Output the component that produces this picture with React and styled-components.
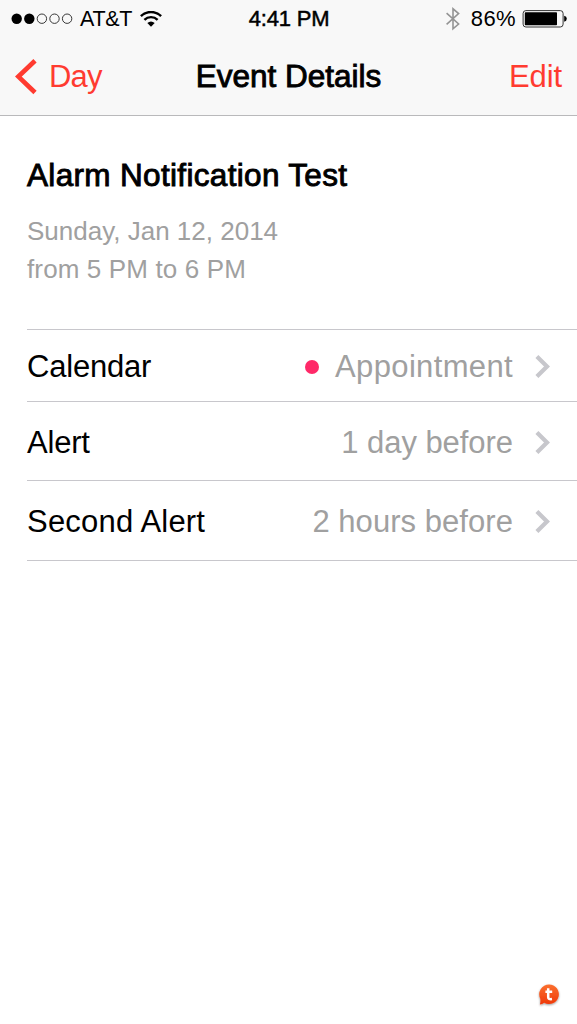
import React from "react";
import styled, { createGlobalStyle } from "styled-components";

const GlobalStyle = createGlobalStyle`
  *, *::before, *::after { box-sizing: border-box; }
  body {
    margin: 0;
    background: #fff;
    color: #000;
    font-family: "Liberation Sans", Arial, Helvetica, sans-serif;
    font-variant-ligatures: none;
  }
  svg { display: block; flex: none; }
`;

const Screen = styled.div`
  width: 100%;
  height: 1024px;
  display: flex;
  flex-direction: column;
  overflow: hidden;
  background: #fff;
`;

const Header = styled.header`
  height: 116px;
  flex: none;
  background: #f8f8f8;
  border-bottom: 1px solid #b9b9bb;
`;

const Label = styled.span`
  font-size: ${(p) => p.$size || 31}px;
  line-height: ${(p) => p.$line || 38}px;
  letter-spacing: ${(p) => p.$track || 0}px;
  color: ${(p) => p.$color || "inherit"};
  -webkit-text-stroke: ${(p) => p.$weight || 0}px currentColor;
  white-space: nowrap;
`;

const StatusBar = styled.div`
  height: 38px;
  display: grid;
  grid-template-columns: 1fr auto 1fr;
  align-items: center;
  padding: 0 10px 0 11px;
`;

const StatusGroup = styled.div`
  display: flex;
  align-items: center;
  justify-content: ${(p) => (p.$end ? "flex-end" : "flex-start")};
  gap: ${(p) => p.$gap}px;
`;

const NavBar = styled.nav`
  height: 76px;
  display: grid;
  grid-template-columns: 1fr auto 1fr;
  align-items: center;
  padding: 0 15px;
`;

const NavButton = styled.button`
  display: flex;
  align-items: center;
  gap: 11px;
  justify-self: ${(p) => (p.$end ? "end" : "start")};
  padding: 2px 0 0;
  border: 0;
  background: none;
  color: #ff3b30;
  font-family: inherit;
`;

const Summary = styled.section`
  height: 213px;
  flex: none;
  display: flex;
  flex-direction: column;
  padding: 40px 27px 0;
`;

const When = styled.div`
  display: flex;
  flex-direction: column;
  margin-top: 18px;
`;

const List = styled.section`
  margin-left: 27px;
  border-top: 1px solid #c8c7cc;
`;

const Row = styled.div`
  height: ${(p) => p.$height}px;
  display: flex;
  align-items: center;
  padding: ${(p) => p.$drop}px 27px 0 0;
  border-bottom: 1px solid #c8c7cc;
`;

const Value = styled.div`
  margin-left: auto;
  display: flex;
  align-items: center;
  color: #a0a0a0;
`;

const Dot = styled.i`
  width: 14px;
  height: 14px;
  margin-right: 16px;
  border-radius: 50%;
  background: #ff2968;
`;

const Disclosure = styled.svg`
  margin-left: 22px;
`;

const Badge = styled.div`
  position: absolute;
  left: 536px;
  top: 982px;
`;

const SignalDots = () => (
  <svg width="62" height="12" viewBox="0 0 62 12">
    {[0, 1, 2, 3, 4].map((i) => (
      <circle
        key={i}
        cx={5.7 + i * 12.6}
        cy="5.7"
        r={i < 2 ? 5.2 : 4.7}
        fill={i < 2 ? "#000" : "none"}
        stroke={i < 2 ? "none" : "#222"}
        strokeWidth="0.9"
      />
    ))}
  </svg>
);

const Wifi = () => (
  <svg width="23" height="16" viewBox="-1 0 23 16" fill="none" stroke="#000">
    <path d="M0.9 5.1A14.6 14.6 0 0 1 21.1 5.1" strokeWidth="2.5" />
    <path d="M4.4 8.8A9.4 9.4 0 0 1 17.6 8.8" strokeWidth="2.4" />
    <path d="M7.3 12Q11 8.8 14.7 12L11 15.7Z" fill="#000" stroke="none" />
  </svg>
);

const Bluetooth = () => (
  <svg width="14" height="24" viewBox="0 0 14 24" fill="none" stroke="#949494" strokeWidth="1.6">
    <path d="M0.6 6.2L12.6 17L7 21.8V1.8L12.6 6.6L0.6 17.4" />
  </svg>
);

const Battery = () => (
  <svg width="45" height="18" viewBox="0 0 45 18">
    <rect x="1.1" y="0.6" width="40" height="16.4" rx="2.8" fill="none" stroke="#333" strokeWidth="1" />
    <rect x="2.8" y="2.3" width="32.2" height="13" rx="0.8" fill="#000" />
    <path d="M42.2 5.8Q44.8 6.4 44.8 8.8T42.2 11.8Z" fill="#000" />
  </svg>
);

const BackIcon = () => (
  <svg width="23" height="36" viewBox="0 0 23 36" fill="none" stroke="#ff3b30" strokeWidth="4.7">
    <path d="M20 1.7L3.4 17.6L20 33.5" />
  </svg>
);

const Chevron = () => (
  <Disclosure width="15" height="24" viewBox="0 0 15 24" fill="none" stroke="#c7c7cc" strokeWidth="4.2">
    <path d="M1.9 1.6L12 11.6L1.9 21.6" />
  </Disclosure>
);

const ChatBadge = () => (
  <svg width="28" height="28" viewBox="0 0 28 28">
    <defs>
      <linearGradient id="badge" x1="0" y1="0" x2="0" y2="1">
        <stop offset="0" stopColor="#fb7030" />
        <stop offset="1" stopColor="#ef3909" />
      </linearGradient>
      <filter id="shade" x="-30%" y="-30%" width="160%" height="160%">
        <feDropShadow dx="0" dy="1" stdDeviation="1" floodColor="#000" floodOpacity="0.4" />
      </filter>
    </defs>
    <path
      d="M13.1 2.5A9.8 9.8 0 1 1 8.2 20.8Q6.2 22.3 3.9 22.4Q4.6 20.2 4.3 16.8A9.8 9.8 0 0 1 13.1 2.5Z"
      fill="url(#badge)"
      filter="url(#shade)"
    />
    <path d="M12.2 6.2V15.2Q12.2 17.7 16 17.1M9.4 9.7H16.2" fill="none" stroke="#fff" strokeWidth="2.5" />
  </svg>
);

const DetailRow = ({ name, value, height, drop = 2, dot, track, nameTrack }) => (
  <Row $height={height} $drop={drop}>
    <Label $track={nameTrack}>{name}</Label>
    <Value>
      {dot && <Dot />}
      <Label $track={track}>{value}</Label>
      <Chevron />
    </Value>
  </Row>
);

export default function App() {
  return (
    <Screen>
      <GlobalStyle />
      <Header>
        <StatusBar>
          <StatusGroup $gap={7}>
            <SignalDots />
            <Label $size={21.5} $line={26} $track={-0.3}>AT&amp;T</Label>
            <Wifi />
          </StatusGroup>
          <Label $size={22} $line={26} $track={-0.2} $weight={0.5}>4:41 PM</Label>
          <StatusGroup $end $gap={6}>
            <Bluetooth />
            <Label $size={22} $line={26} $track={0.4}>&#8201;86%</Label>
            <Battery />
          </StatusGroup>
        </StatusBar>
        <NavBar>
          <NavButton>
            <BackIcon />
            <Label $track={-0.8}>Day</Label>
          </NavButton>
          <Label $size={31.5} $weight={0.9}>Event Details</Label>
          <NavButton $end>
            <Label $track={-0.1}>Edit</Label>
          </NavButton>
        </NavBar>
      </Header>
      <Summary>
        <Label $size={31.5} $weight={0.9} $track={0.33}>Alarm Notification Test</Label>
        <When>
          <Label $size={26} $color="#a0a0a0">Sunday, Jan 12, 2014</Label>
          <Label $size={26} $color="#a0a0a0" $track={0.13}>from 5 PM to 6 PM</Label>
        </When>
      </Summary>
      <List>
        <DetailRow name="Calendar" nameTrack={-0.2} value="Appointment" height={72} dot track={0.35} />
        <DetailRow name="Alert" nameTrack={-0.2} value="1 day before" height={79} drop={3} track={-0.05} />
        <DetailRow name="Second Alert" nameTrack={0.2} value="2 hours before" height={80} track={0.05} />
      </List>
      <Badge>
        <ChatBadge />
      </Badge>
    </Screen>
  );
}
